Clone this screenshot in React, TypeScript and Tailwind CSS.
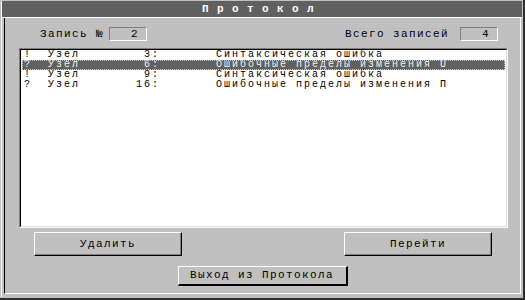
const rows = [
  { mark: '!', node: '3', msg: 'Синтаксическая ошибка' },
  { mark: '?', node: '6', msg: 'Ошибочные пределы изменения U' },
  { mark: '!', node: '9', msg: 'Синтаксическая ошибка' },
  { mark: '?', node: '16', msg: 'Ошибочные пределы изменения П' },
]

function line(r: { mark: string; node: string; msg: string }) {
  const num = (r.node + ':').padStart(10, ' ')
  return `${r.mark}  Узел${num}       ${r.msg}`
}

function Field({ value }: { value: string }) {
  return (
    <div className="w-[38px] h-[14px] border-t border-l border-[#808080] border-b border-r border-b-white border-r-white flex items-center justify-end pr-[7px] leading-none">
      {value}
    </div>
  )
}

export default function App() {
  const selected = 1

  return (
    <div className="w-[525px] h-[300px] bg-[#c0c0c0] border-r-2 border-b-2 border-[#303030] p-px font-['Liberation_Mono',monospace] text-[11px] tracking-[1.4px] text-black">
      <div className="h-full flex flex-col border-l border-white">
        {/* Title bar */}
        <div className="h-[16px] shrink-0 bg-[#606060] flex items-center justify-center text-white font-bold tracking-[8.4px] leading-none">
          Протокол
        </div>
        <div className="h-px bg-white shrink-0" />

        {/* Body frame */}
        <div className="flex-1 ml-[2px] mr-px mb-[3px] border-l border-black border-r border-b border-r-white border-b-white flex flex-col">
          <div className="mt-[9px] h-[14px] flex items-center">
            <span className="ml-[35px] mr-[5px] leading-none">Запись №</span>
            <Field value="2" />
            <span className="ml-auto mr-[11px] leading-none">Всего записей</span>
            <div className="mr-[22px]">
              <Field value="4" />
            </div>
          </div>

          {/* List */}
          <div className="mt-[7px] ml-[14px] w-[489px] h-[180px] border-t border-l border-[#808080] border-b border-r border-b-white border-r-white">
            <div className="h-full bg-white border-t border-l border-black border-b border-r border-b-[#dfdfdf] border-r-[#dfdfdf] text-[10px] tracking-[2px]">
              {rows.map((r, i) => (
                <div
                  key={i}
                  className={
                    i === selected
                      ? 'mx-px h-[10px] flex items-center pl-[2px] whitespace-pre leading-[10px] bg-[#606060] text-[#f0f0f0] outline-1 outline-dotted outline-offset-[-1px] outline-[#c8c8c8]'
                      : 'mx-px h-[10px] flex items-center pl-[2px] whitespace-pre leading-[10px]'
                  }
                >
                  {line(r)}
                </div>
              ))}
            </div>
          </div>

          {/* Buttons */}
          <div className="mt-[4px] flex">
            <button className="ml-[29px] w-[148px] h-[24px] bg-[#c0c0c0] border-t border-l border-white border-r border-b border-r-black border-b-black shadow-[inset_-1px_-1px_0_#808080] leading-none tracking-[1.4px]">
              Удалить
            </button>
            <button className="ml-auto mr-[28px] w-[148px] h-[24px] bg-[#c0c0c0] border-t border-l border-white border-r border-b border-r-black border-b-black shadow-[inset_-1px_-1px_0_#808080] leading-none tracking-[1.4px]">
              Перейти
            </button>
          </div>

          <div className="mt-[10px] flex justify-center">
            <button className="w-[170px] h-[20px] bg-[#c0c0c0] border-t border-l border-white border-r-2 border-b-2 border-r-black border-b-black leading-none tracking-[1.4px]">
              Выход из Протокола
            </button>
          </div>
        </div>
      </div>
    </div>
  )
}
